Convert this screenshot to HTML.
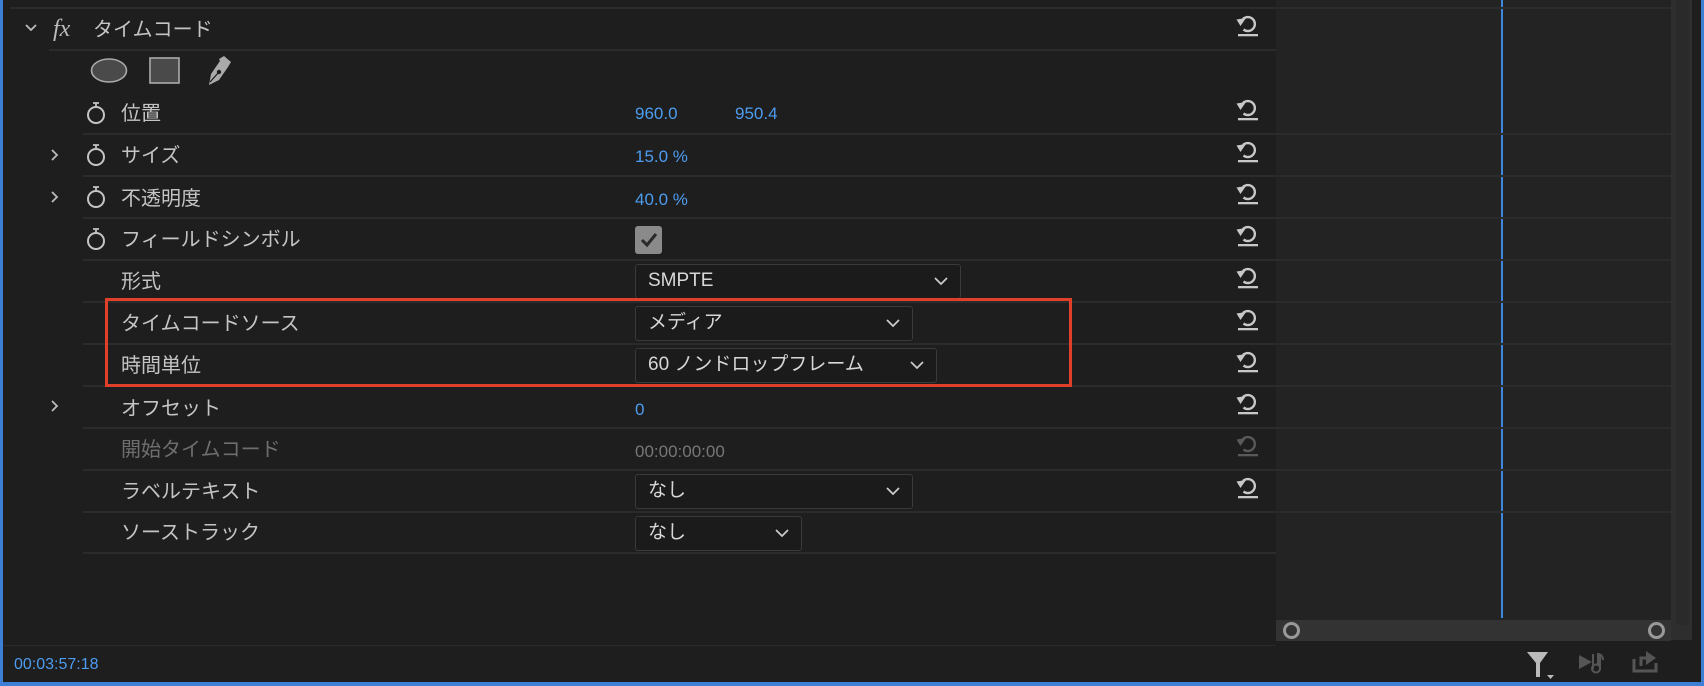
<!DOCTYPE html>
<html><head><meta charset="utf-8"><style>
*{margin:0;padding:0;box-sizing:border-box}
body{width:1704px;height:686px;background:#1e1e1e;position:relative;overflow:hidden;font-family:"Liberation Sans","Noto Sans CJK JP",sans-serif;color:#c6c6c6}
.a{position:absolute}
.sep{position:absolute;height:2px;background:#2b2b2b;left:83px;width:1193px}
.lbl{position:absolute;font-size:20px;line-height:24px;color:#c4c4c4;white-space:nowrap}
.val{position:absolute;font-size:17px;line-height:20px;color:#4d9cf0;white-space:nowrap}
.dd{position:absolute;height:35px;border:1.5px solid #3a3a3a;border-radius:3px;background:#1b1b1b;font-size:19px;color:#d8d8d8;padding-left:12px;line-height:32px;white-space:nowrap}
.dd svg{position:absolute;right:12px;top:11px}
.rs{position:absolute;left:1234px}
.sw{position:absolute;left:86px}
.chev{position:absolute}
</style></head><body>
<div class="a" style="left:1276px;top:0;width:395px;height:641px;background:#232323"></div>
<div class="a" style="left:1671px;top:0;width:21px;height:640px;background:#2e2e2e"></div>
<div class="a" style="left:1692px;top:0;width:10px;height:686px;background:#1e1e1e"></div>
<div class="a" style="left:1501px;top:0;width:2px;height:618px;background:#3d86e0"></div>
<div class="a" style="left:0;top:0;width:3px;height:686px;background:#3d7fd4"></div>
<div class="a" style="left:1701px;top:0;width:3px;height:686px;background:#3d7fd4"></div>
<div class="a" style="left:0;top:682px;width:1704px;height:4px;background:#3d7fd4"></div>
<div class="a" style="left:10px;top:7px;width:1266px;height:2px;background:#2b2b2b"></div>
<div class="a" style="left:1276px;top:7px;width:395px;height:2px;background:#2b2b2b"></div>
<div class="sep" style="left:49px;width:1227px;top:49px"></div>
<div class="sep" style="top:133px;width:1588px"></div>
<div class="sep" style="top:175px;width:1588px"></div>
<div class="sep" style="top:217px;width:1588px"></div>
<div class="sep" style="top:259px;width:1588px"></div>
<div class="sep" style="top:301px;width:1588px"></div>
<div class="sep" style="top:343px;width:1588px"></div>
<div class="sep" style="top:385px;width:1588px"></div>
<div class="sep" style="top:427px;width:1588px"></div>
<div class="sep" style="top:469px;width:1588px"></div>
<div class="sep" style="top:511px;width:1588px"></div>
<div class="sep" style="top:552px;width:1193px"></div>
<div class="a" style="left:3px;top:645px;width:1273px;height:1px;background:#2a2a2a"></div>
<svg class="chev" style="left:24px;top:23px" width="14" height="10"><path d="M2 2l5 5 5-5" stroke="#bbb" stroke-width="1.8" fill="none"/></svg>
<div class="lbl" style="left:53px;top:17px;font-family:'Liberation Serif',serif;font-style:italic;font-size:24px;color:#bbb">fx</div>
<div class="lbl" style="left:93px;top:18px">タイムコード</div>
<svg class="a" style="left:90px;top:56px" width="150" height="32">
<ellipse cx="19" cy="14.5" rx="17.5" ry="11.5" fill="#4a4a4a" stroke="#aaa" stroke-width="1.6"/>
<rect x="60" y="2" width="29" height="25" fill="#4a4a4a" stroke="#aaa" stroke-width="1.6"/>
<path d="M129 3l5-3 7 6-3 5-9 13-10 5 2-11 9-13z" fill="#aaa"/><circle cx="129" cy="16" r="2.2" fill="#1e1e1e"/><path d="M129 16l-9 10" stroke="#1e1e1e" stroke-width="1.3"/>
</svg>
<svg width="0" height="0"><defs><g id="sw"><path d="M7 1h6M10 1v3" stroke="#c4c4c4" stroke-width="1.8" fill="none"/><circle cx="10" cy="13" r="8" stroke="#c4c4c4" stroke-width="2" fill="none"/></g>
<g id="rs"><path d="M9 7A7 7 0 1 1 9.5 17.5" stroke="#c8c8c8" stroke-width="2.4" fill="none"/><path d="M2.5 7.5L12 6 6.5 14z" fill="#c8c8c8"/><rect x="4" y="22" width="20" height="2.3" fill="#c8c8c8"/></g></defs></svg>
<svg class="sw" style="top:102px" width="22" height="24"><use href="#sw"/></svg>
<svg class="sw" style="top:144px" width="22" height="24"><use href="#sw"/></svg>
<svg class="sw" style="top:186px" width="22" height="24"><use href="#sw"/></svg>
<svg class="sw" style="top:228px" width="22" height="24"><use href="#sw"/></svg>
<svg class="chev" style="left:50px;top:148px" width="10" height="14"><path d="M2 2l5 5-5 5" stroke="#bbb" stroke-width="1.8" fill="none"/></svg>
<svg class="chev" style="left:50px;top:190px" width="10" height="14"><path d="M2 2l5 5-5 5" stroke="#bbb" stroke-width="1.8" fill="none"/></svg>
<svg class="chev" style="left:50px;top:399px" width="10" height="14"><path d="M2 2l5 5-5 5" stroke="#bbb" stroke-width="1.8" fill="none"/></svg>
<div class="lbl" style="left:121px;top:102px">位置</div>
<div class="lbl" style="left:121px;top:144px">サイズ</div>
<div class="lbl" style="left:121px;top:187px">不透明度</div>
<div class="lbl" style="left:121px;top:228px">フィールドシンボル</div>
<div class="lbl" style="left:121px;top:270px">形式</div>
<div class="lbl" style="left:121px;top:312px">タイムコードソース</div>
<div class="lbl" style="left:121px;top:354px">時間単位</div>
<div class="lbl" style="left:121px;top:397px">オフセット</div>
<div class="lbl" style="left:121px;top:438px;color:#6e6e6e">開始タイムコード</div>
<div class="lbl" style="left:121px;top:480px">ラベルテキスト</div>
<div class="lbl" style="left:121px;top:521px">ソーストラック</div>
<div class="val" style="left:635px;top:104px">960.0</div>
<div class="val" style="left:735px;top:104px">950.4</div>
<div class="val" style="left:635px;top:147px">15.0 %</div>
<div class="val" style="left:635px;top:190px">40.0 %</div>
<div class="a" style="left:635px;top:226px;width:27px;height:28px;background:#8a8a8a;border-radius:3px"></div>
<svg class="a" style="left:635px;top:226px" width="27" height="28"><path d="M7 14l5 5 9-11" stroke="#2a2a2a" stroke-width="3" fill="none"/></svg>
<div class="dd" style="left:635px;top:264px;width:326px">SMPTE<svg width="14" height="10"><path d="M1 2l6 6 6-6" stroke="#ccc" stroke-width="1.7" fill="none"/></svg></div>
<div class="dd" style="left:635px;top:306px;width:278px">メディア<svg width="14" height="10"><path d="M1 2l6 6 6-6" stroke="#ccc" stroke-width="1.7" fill="none"/></svg></div>
<div class="dd" style="left:635px;top:348px;width:302px">60 ノンドロップフレーム<svg width="14" height="10"><path d="M1 2l6 6 6-6" stroke="#ccc" stroke-width="1.7" fill="none"/></svg></div>
<div class="val" style="left:635px;top:400px">0</div>
<div class="val" style="left:635px;top:442px;color:#777">00:00:00:00</div>
<div class="dd" style="left:635px;top:474px;width:278px">なし<svg width="14" height="10"><path d="M1 2l6 6 6-6" stroke="#ccc" stroke-width="1.7" fill="none"/></svg></div>
<div class="dd" style="left:635px;top:516px;width:167px">なし<svg width="14" height="10"><path d="M1 2l6 6 6-6" stroke="#ccc" stroke-width="1.7" fill="none"/></svg></div>
<div class="a" style="left:105px;top:298px;width:967px;height:89px;border:3px solid #e0402a"></div>
<svg class="rs" style="top:12px" width="26" height="26"><use href="#rs"/></svg>
<svg class="rs" style="top:96px" width="26" height="26"><use href="#rs"/></svg>
<svg class="rs" style="top:138px" width="26" height="26"><use href="#rs"/></svg>
<svg class="rs" style="top:180px" width="26" height="26"><use href="#rs"/></svg>
<svg class="rs" style="top:222px" width="26" height="26"><use href="#rs"/></svg>
<svg class="rs" style="top:264px" width="26" height="26"><use href="#rs"/></svg>
<svg class="rs" style="top:306px" width="26" height="26"><use href="#rs"/></svg>
<svg class="rs" style="top:348px" width="26" height="26"><use href="#rs"/></svg>
<svg class="rs" style="top:390px" width="26" height="26"><use href="#rs"/></svg>
<svg class="rs" style="top:432px;opacity:.35" width="26" height="26"><use href="#rs"/></svg>
<svg class="rs" style="top:474px" width="26" height="26"><use href="#rs"/></svg>
<div class="a" style="left:1276px;top:620px;width:395px;height:21px;background:#333"></div>
<div class="a" style="left:1283px;top:622px;width:17px;height:17px;border:3px solid #999;border-radius:50%"></div>
<div class="a" style="left:1648px;top:622px;width:17px;height:17px;border:3px solid #999;border-radius:50%"></div>
<div class="a" style="left:1676px;top:0;width:13px;height:626px;background:#2a2a2a;border-radius:0 0 5px 5px"></div>
<div class="val" style="left:14px;top:655px;font-size:16px">00:03:57:18</div>
<svg class="a" style="left:1526px;top:651px" width="28" height="30"><path d="M1 1h21l-8 11v14h-4V12z" fill="#bbb"/><path d="M21 24h7l-3.5 4z" fill="#bbb"/></svg>
<svg class="a" style="left:1578px;top:651px" width="28" height="26"><path d="M1 4l13 7-13 7z" fill="#555"/><path d="M15 3v15" stroke="#555" stroke-width="2"/><path d="M22 3v14a4 4 0 1 1-2-3V3c3 0 5 3 5 6" stroke="#555" stroke-width="2" fill="none"/></svg>
<svg class="a" style="left:1632px;top:649px" width="28" height="26"><path d="M2 10v12h22v-8" stroke="#555" stroke-width="3" fill="none"/><path d="M9 17V9h6" stroke="#555" stroke-width="3" fill="none"/><path d="M14 2l10 7-10 7z" fill="#555"/></svg>
</body></html>
